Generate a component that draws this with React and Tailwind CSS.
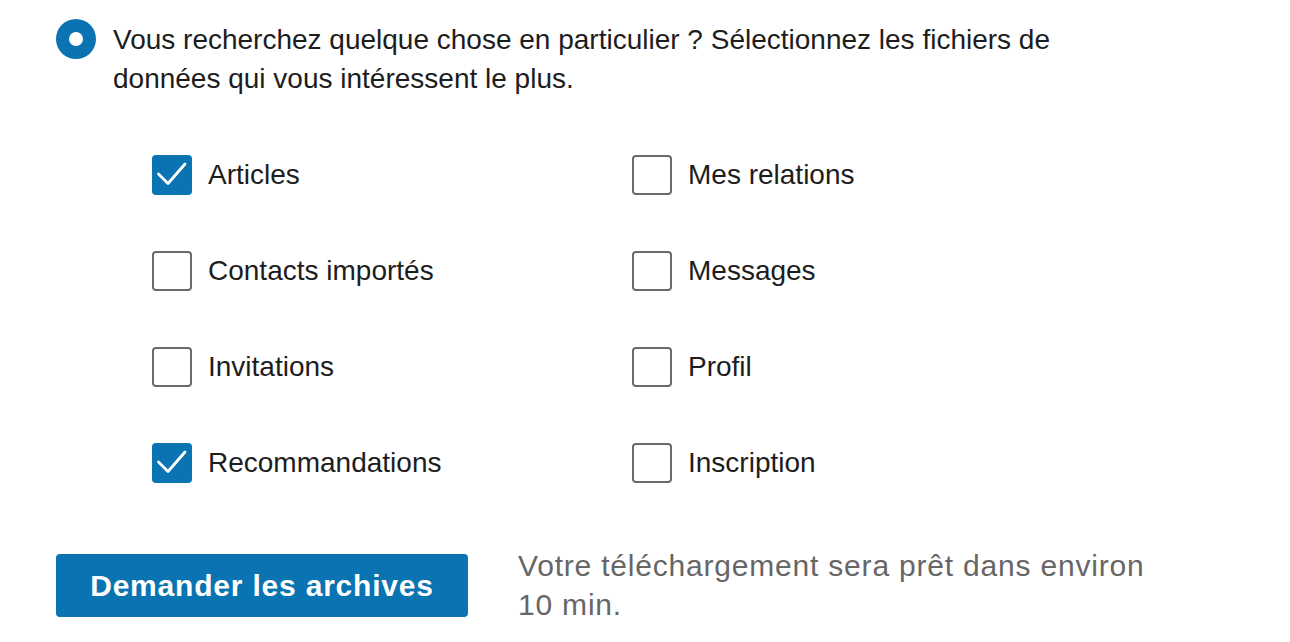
const items = [
  { label: "Articles", checked: true },
  { label: "Mes relations", checked: false },
  { label: "Contacts importés", checked: false },
  { label: "Messages", checked: false },
  { label: "Invitations", checked: false },
  { label: "Profil", checked: false },
  { label: "Recommandations", checked: true },
  { label: "Inscription", checked: false },
];

const Checkbox = ({ label, checked }) => (
  <label className="flex items-center h-[40px] gap-4">
    {checked ? (
      <span className="w-10 h-10 rounded-[4px] bg-[#0a73b1] shrink-0">
        <svg width="40" height="40" viewBox="0 0 40 40" fill="none">
          <path d="M6.5 19l9.5 9.5L33 9" stroke="#fff" strokeWidth="2.8" strokeLinecap="round" strokeLinejoin="round" />
        </svg>
      </span>
    ) : (
      <span className="w-10 h-10 rounded-[4px] border-2 border-[#6b6b6b] bg-white shrink-0"></span>
    )}
    <span className="text-[28px] text-[#1d1d1d]">{label}</span>
  </label>
);

export default function App() {
  return (
    <div className="bg-white w-[1290px] h-[642px] overflow-hidden font-['Liberation_Sans',Arial,sans-serif] text-[#1d1d1d]">
      <div className="pt-[19px] pl-[56px]">
        {/* Radio option */}
        <div className="flex items-start gap-[17px]">
          <span className="w-10 h-10 rounded-full bg-[#0a73b1] flex items-center justify-center shrink-0">
            <span className="w-[14px] h-[14px] rounded-full bg-white"></span>
          </span>
          <p className="text-[28px] leading-[39px] w-[960px] mt-[1px]">
            Vous recherchez quelque chose en particulier ? Sélectionnez les fichiers de données qui vous intéressent le plus.
          </p>
        </div>

        {/* Checkboxes */}
        <div className="grid grid-cols-[480px_480px] gap-y-[56px] pl-[96px] mt-[57px]">
          {items.map((it) => (
            <Checkbox key={it.label} {...it} />
          ))}
        </div>

        {/* Footer */}
        <div className="flex items-start gap-[50px] mt-[71px]">
          <button className="w-[412px] h-[63px] rounded-[4px] bg-[#0a73b1] text-white font-bold text-[30px] tracking-[0.8px] flex items-center justify-center">
            Demander les archives
          </button>
          <p className="text-[30px] tracking-[0.8px] leading-[39px] text-[#666] w-[660px] -mt-[8px]">
            Votre téléchargement sera prêt dans environ 10 min.
          </p>
        </div>
      </div>
    </div>
  );
}
